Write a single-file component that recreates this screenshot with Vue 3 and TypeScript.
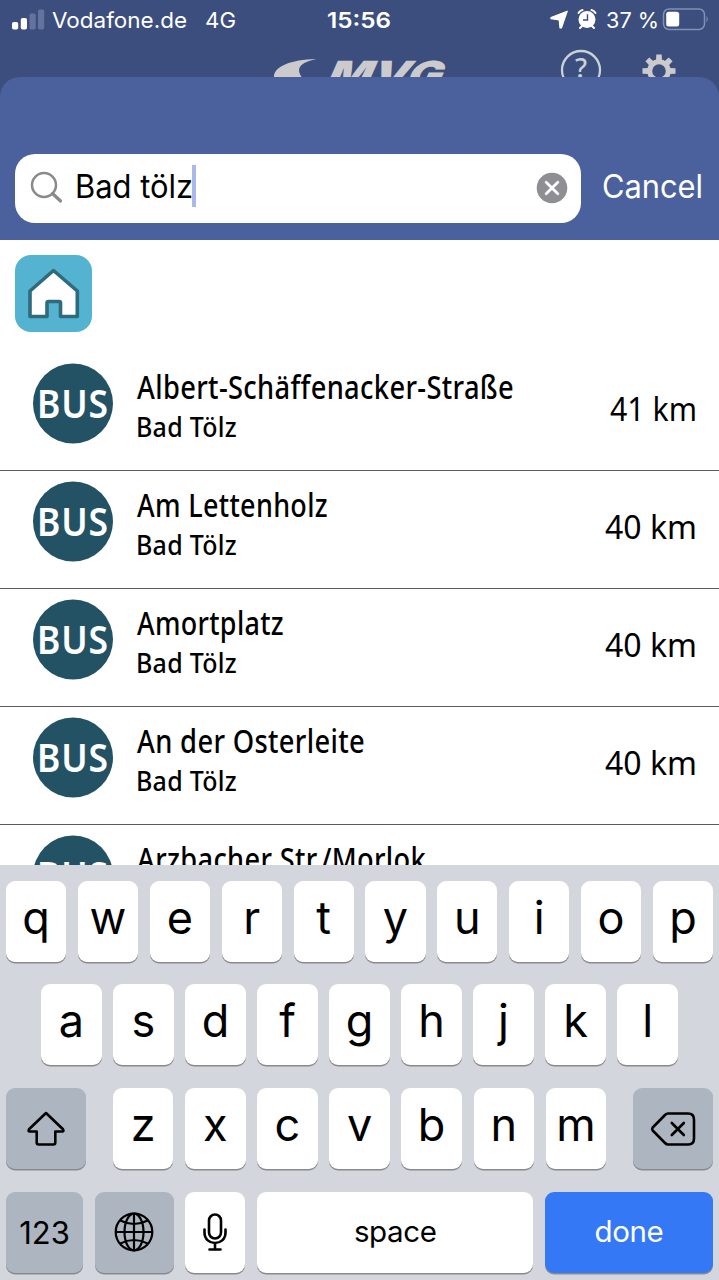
<script setup lang="ts">
interface Stop {
  name: string
  width: number
  town?: string
  distance?: string
  distanceWidth?: number
}

const stops: Stop[] = [
  { name: 'Albert-Schäffenacker-Straße', width: 377, town: 'Bad Tölz', distance: '41 km', distanceWidth: 87 },
  { name: 'Am Lettenholz', width: 191, town: 'Bad Tölz', distance: '40 km', distanceWidth: 92 },
  { name: 'Amortplatz', width: 147, town: 'Bad Tölz', distance: '40 km', distanceWidth: 92 },
  { name: 'An der Osterleite', width: 228, town: 'Bad Tölz', distance: '40 km', distanceWidth: 92 },
  { name: 'Arzbacher Str./Morlok', width: 289 },
]

const topKeys: string[] = [...'qwertyuiop']
const middleKeys: string[] = [...'asdfghjkl']
const bottomKeys: string[] = [...'zxcvbnm']
const teeth: number[] = [0, 45, 90, 135, 180, 225, 270, 315]
</script>

<template>
  <div class="screen">
    <header class="backdrop">
      <div class="status">
        <svg class="signal" width="33" height="22" viewBox="0 0 33 22">
          <rect x="0" y="13" width="6.2" height="7.5" rx="1.8" fill="#fff" />
          <rect x="8.8" y="9" width="6.2" height="11.5" rx="1.8" fill="#fff" />
          <rect x="17.5" y="4.500" width="6.2" height="16" rx="1.800" fill="#64739d" />
          <rect x="26" y="0.500" width="6.200" height="20" rx="1.800" fill="#64739d" />
        </svg>
        <svg class="carrier" width="135" height="40">
          <text x="0" y="28" textLength="135" lengthAdjust="spacingAndGlyphs">Vodafone.de</text>
        </svg>
        <svg class="network" width="32" height="40">
          <text x="0" y="28" textLength="31" lengthAdjust="spacingAndGlyphs">4G</text>
        </svg>
        <svg class="time" width="65" height="40">
          <text x="0" y="28" textLength="64" lengthAdjust="spacingAndGlyphs">15:56</text>
        </svg>
        <svg class="locate" width="19" height="20" viewBox="0 0 19 20">
          <path d="M17.2 1.2 L11.400 18 L10 18 L9.200 9.800 L1 8.700 L1 7.500 Z" fill="#fff" stroke="#fff" stroke-width="1.200" stroke-linejoin="round" />
        </svg>
        <svg class="alarm" width="20" height="22" viewBox="0 0 20 22">
          <circle cx="10" cy="11.500" r="8.500" fill="#fff" />
          <path d="M1.500 5 Q3 2.500 5.500 2 M18.500 5 Q17 2.500 14.500 2 M5 18 L3 20 M15 18 L17 20" fill="none" stroke="#fff" stroke-width="2" stroke-linecap="round" />
          <path d="M10.500 6.300 V12 H6" fill="none" stroke="#3c4e7e" stroke-width="1.400" />
        </svg>
        <svg class="percent" width="53" height="40">
          <text x="0" y="28" textLength="53" lengthAdjust="spacingAndGlyphs">37 %</text>
        </svg>
        <svg class="battery" width="47" height="23" viewBox="0 0 47 23">
          <rect x="0.500" y="1" width="41" height="20.500" rx="5.500" fill="none" stroke="#8290b5" stroke-width="1.500" />
          <rect x="3.200" y="3.800" width="13" height="14.800" rx="2.500" fill="#fff" />
          <path d="M43.500 8 Q46 11 43.500 14.500 Z" fill="#8290b5" />
        </svg>
      </div>
      <div class="appbar">
        <svg class="logo" width="176" height="40" viewBox="0 0 176 40">
          <path d="M1 21 C0.500 11 17 3.500 43.500 3 C27 6.500 21 12.500 31 24 H1 Z" fill="#cbcbcd" />
          <text class="mvg" transform="translate(51 30.500) skewX(-24)" x="0" y="0" textLength="115" lengthAdjust="spacingAndGlyphs">MVG</text>
        </svg>
        <svg class="help" width="42" height="42" viewBox="0 0 42 42">
          <circle cx="21" cy="21" r="19" fill="none" stroke="#cbd2d6" stroke-width="2.300" />
          <text class="mark" x="21" y="28.500" text-anchor="middle">?</text>
        </svg>
        <svg class="gear" width="34" height="34" viewBox="-17 -17 34 34">
          <circle r="9.300" fill="none" stroke="#cbcbcd" stroke-width="5" />
          <path v-for="angle in teeth" :key="angle" d="M-3 -10 L-2.700 -16.500 H2.700 L3 -10 Z" fill="#cbcbcd" :transform="`rotate(${angle})`" />
        </svg>
      </div>
    </header>

    <section class="sheet">
      <div class="field">
        <svg class="glass" width="34" height="34" viewBox="0 0 34 34">
          <circle cx="14" cy="14" r="12" fill="none" stroke="#8a8a8e" stroke-width="2.500" />
          <path d="M22.500 22.500 L30.500 30" stroke="#8a8a8e" stroke-width="3.200" stroke-linecap="round" />
        </svg>
        <svg class="query" width="118" height="69">
          <text x="0" y="43.800" textLength="118" lengthAdjust="spacingAndGlyphs">Bad tölz</text>
        </svg>
        <i class="caret"></i>
        <svg class="clear" width="32" height="32" viewBox="0 0 32 32">
          <circle cx="16" cy="16" r="15.300" fill="#8e8e93" />
          <path d="M10.200 10.200 L21.800 21.800 M21.800 10.200 L10.200 21.800" stroke="#fff" stroke-width="2.800" stroke-linecap="round" />
        </svg>
      </div>
      <svg class="cancel" width="102" height="69">
        <text x="0" y="43.800" textLength="101" lengthAdjust="spacingAndGlyphs">Cancel</text>
      </svg>
    </section>

    <main class="results">
      <div class="home">
        <svg width="77" height="77" viewBox="0 0 77 77">
          <path d="M38.500 15.500 L62.300 36 V61.500 H45.500 V48 Q45.500 46.500 44 46.500 H33.500 Q32 46.500 32 48 V61.500 H15 V36 Z" fill="#fff" stroke="#2f6b7d" stroke-width="3.600" stroke-linejoin="round" />
        </svg>
      </div>
      <ul class="stops">
        <li v-for="stop in stops" :key="stop.name" class="stop">
          <svg class="badge" width="80" height="80" viewBox="0 0 80 80">
            <circle cx="40" cy="39.500" r="40" fill="#225264" />
            <text x="4" y="53.500" textLength="72" lengthAdjust="spacingAndGlyphs">BUS</text>
          </svg>
          <svg class="label" width="400" height="117">
            <text class="name" x="0" y="46" :textLength="stop.width" lengthAdjust="spacingAndGlyphs">{{ stop.name }}</text>
            <text v-if="stop.town" class="town" x="-1" y="83.500" textLength="101" lengthAdjust="spacingAndGlyphs">{{ stop.town }}</text>
          </svg>
          <svg v-if="stop.distance" class="distance" :width="stop.distanceWidth" height="117">
            <text x="0" y="67.500" :textLength="stop.distanceWidth" lengthAdjust="spacingAndGlyphs">{{ stop.distance }}</text>
          </svg>
        </li>
      </ul>
    </main>

    <footer class="keyboard">
      <div class="row">
        <span v-for="key in topKeys" :key="key" class="key">{{ key }}</span>
      </div>
      <div class="row inset">
        <span v-for="key in middleKeys" :key="key" class="key">{{ key }}</span>
      </div>
      <div class="row">
        <span class="key dark shift">
          <svg width="40" height="36" viewBox="0 0 40 36">
            <path d="M20 2 L37 18.300 Q38.300 20.500 36 20.500 H29.300 V31.500 Q29.300 33.500 27.300 33.500 H12.700 Q10.700 33.500 10.700 31.500 V20.500 H4 Q1.700 20.500 3 18.300 Z" fill="none" stroke="#000" stroke-width="2.600" stroke-linejoin="round" />
          </svg>
        </span>
        <div class="letters">
          <span v-for="key in bottomKeys" :key="key" class="key">{{ key }}</span>
        </div>
        <span class="key dark shift">
          <svg width="46" height="36" viewBox="0 0 46 36">
            <path d="M18 2.500 H38 Q44 2.500 44 8.500 V27.500 Q44 33.500 38 33.500 H18 Q16.500 33.500 15 32 L2.700 19.500 Q1.500 18 2.700 16.500 L15 4 Q16.500 2.500 18 2.500 Z" fill="none" stroke="#000" stroke-width="2.600" stroke-linejoin="round" />
            <path d="M21.800 12 L33.800 24 M33.800 12 L21.800 24" stroke="#000" stroke-width="2.600" stroke-linecap="round" />
          </svg>
        </span>
      </div>
      <div class="row">
        <span class="key dark numbers">123</span>
        <span class="key dark globe">
          <svg width="40" height="40" viewBox="0 0 40 40">
            <g fill="none" stroke="#000" stroke-width="2.200">
              <circle cx="20" cy="20" r="18.300" />
              <ellipse cx="20" cy="20" rx="9.500" ry="18.300" />
              <path d="M20 2 V38 M2 20 H38 M6.300 8.500 Q20 15.500 33.700 8.500 M6.300 31.500 Q20 24.500 33.700 31.500" />
            </g>
          </svg>
        </span>
        <span class="key mic">
          <svg width="26" height="40" viewBox="0 0 26 40">
            <g fill="none" stroke="#000" stroke-width="2.600" stroke-linecap="round">
              <rect x="7" y="2.500" width="12" height="24" rx="6" />
              <path d="M2.500 17.500 V20.500 C2.500 34.500 23.500 34.500 23.500 20.500 V17.500 M13 31 V37 M7.500 37.500 H18.500" />
            </g>
          </svg>
        </span>
        <span class="key space">space</span>
        <span class="key done">done</span>
      </div>
    </footer>
  </div>
</template>

<style>
body {
  margin: 0;
  overflow: hidden;
}
</style>

<style scoped>
.screen {
  width: 719px;
  height: 1280px;
  overflow: hidden;
  display: flex;
  flex-direction: column;
  background: #3c4e7e;
  font-family: Inter, "Liberation Sans", sans-serif;
}
svg {
  display: block;
  flex: none;
  overflow: visible;
}
.backdrop {
  flex: none;
  height: 77px;
  margin-bottom: -20px;
  padding-bottom: 20px;
  box-sizing: content-box;
  overflow: hidden;
}
.status {
  height: 40px;
  display: flex;
  align-items: center;
  padding-left: 12px;
  font-size: 22px;
}
.status text {
  fill: #fff;
}
.signal {
  margin-bottom: 1px;
}
.carrier {
  margin-left: 7px;
}
.network {
  margin-left: 17.500px;
}
.time {
  margin-left: 90.500px;
  font-weight: 600;
}
.locate {
  margin-left: 157.500px;
}
.alarm {
  margin-left: 8.500px;
  margin-bottom: 3px;
}
.percent {
  margin-left: 8.500px;
}
.battery {
  margin-left: 4px;
  margin-bottom: 2px;
}
.appbar {
  display: flex;
  align-items: flex-start;
  padding-left: 273px;
}
.logo {
  margin-top: 16px;
}
.mvg {
  font-size: 36px;
  font-weight: 900;
  fill: #cbcbcd;
}
.help {
  margin: 9px 0 0 111px;
}
.mark {
  font-family: "Noto Sans", sans-serif;
  font-size: 27px;
  font-weight: 500;
  fill: #cbd2d6;
}
.gear {
  margin: 13.500px 0 0 40px;
}
.sheet {
  position: relative;
  flex: none;
  box-sizing: border-box;
  height: 163px;
  padding: 76.500px 0 0 15px;
  display: flex;
  align-items: flex-start;
  border-radius: 20px 20px 0 0;
  background: #4b619d;
}
.field {
  width: 566px;
  height: 69px;
  display: flex;
  align-items: center;
  border-radius: 20px;
  background: #fff;
}
.glass {
  margin-left: 14.500px;
}
.query {
  margin-left: 11.500px;
  font-size: 32px;
}
.caret {
  width: 4px;
  height: 42px;
  margin: 0 0 4px -1.500px;
  background: #aab8ec;
}
.clear {
  margin: 0 13px 0 auto;
}
.cancel {
  margin-left: 21px;
  font-size: 32px;
}
.cancel text {
  fill: #fff;
}
.results {
  flex: none;
  height: 625px;
  overflow: hidden;
  background: #fff;
}
.home {
  width: 77px;
  height: 77px;
  margin: 15px 0 21px 15px;
  border-radius: 16px;
  background: #53b3d0;
}
.stops {
  list-style: none;
  margin: 0;
  padding: 0;
}
.stop {
  box-sizing: border-box;
  height: 118px;
  display: flex;
  align-items: flex-start;
  padding: 0 22px 0 33px;
  border-bottom: 1px solid #5c5c5e;
}
.badge {
  margin-top: 11px;
  font-family: "Noto Sans", sans-serif;
  font-size: 39px;
  font-weight: 650;
  letter-spacing: 1px;
}
.badge text {
  fill: #fff;
}
.label {
  margin-left: 23.500px;
  font-family: "Noto Sans", sans-serif;
  font-weight: 500;
}
.name {
  font-size: 32px;
  letter-spacing: 0.400px;
}
.town {
  font-size: 27.500px;
  letter-spacing: 0.300px;
}
.distance {
  margin-left: auto;
  font-family: "Noto Sans", sans-serif;
  font-size: 32px;
}
.keyboard {
  flex: 1;
  box-sizing: border-box;
  display: flex;
  flex-direction: column;
  gap: 22.700px;
  padding: 15.700px 6px 0;
  background: #d3d6dc;
}
.row {
  flex: none;
  display: flex;
  gap: 11.700px;
  height: 81px;
}
.inset {
  padding: 0 35.200px;
}
.letters {
  flex: 1;
  display: flex;
  gap: 11.700px;
  margin: 0 15.300px;
}
.key {
  flex: 1 1 0;
  box-sizing: border-box;
  min-width: 0;
  height: 81px;
  padding-bottom: 8px;
  display: flex;
  align-items: center;
  justify-content: center;
  border-radius: 9px;
  background: #fff;
  box-shadow: 0 1.500px 0 #898a8f;
  font-size: 45px;
  font-weight: 400;
  line-height: 1;
  color: #000;
}
.dark {
  background: #adb5c0;
  padding-bottom: 0;
}
.shift {
  flex: none;
  width: 80px;
}
.numbers {
  flex: none;
  width: 77px;
  font-size: 31px;
}
.globe {
  flex: none;
  width: 79px;
}
.mic {
  flex: none;
  width: 60px;
  padding-bottom: 0;
}
.space {
  font-size: 29.500px;
  letter-spacing: -0.400px;
  padding-bottom: 2px;
}
.done {
  flex: none;
  width: 168px;
  font-size: 29.500px;
  letter-spacing: -0.400px;
  padding-bottom: 2px;
  background: #3478f6;
  color: #fff;
}
</style>
